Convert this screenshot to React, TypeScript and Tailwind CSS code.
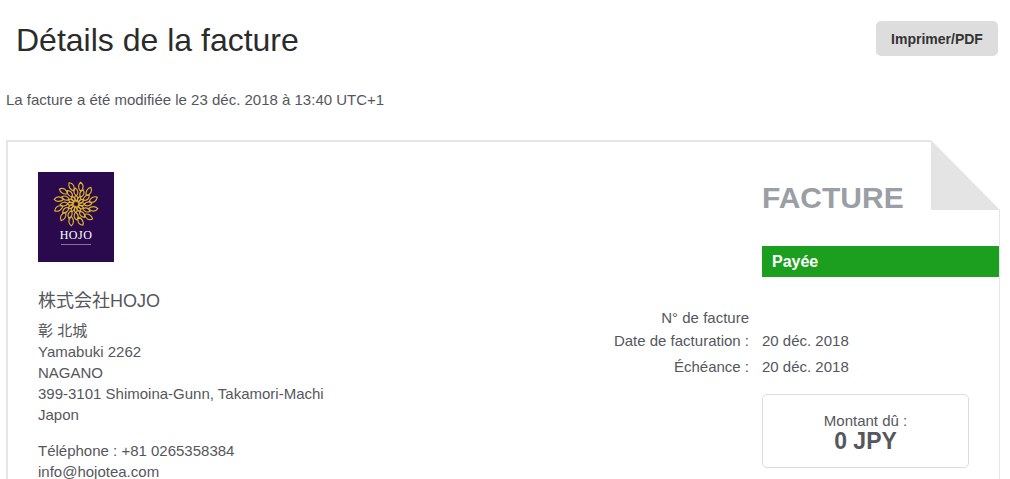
const sans = { fontFamily: '"Liberation Sans", "Noto Sans CJK JP", sans-serif' };

const petals = [0, 30, 60, 90, 120, 150, 180, 210, 240, 270, 300, 330];

function Logo() {
  return (
    <div className="flex h-[90px] w-[76px] flex-col items-center bg-[#2a0a4c]">
      <svg viewBox="0 0 52 52" className="mt-[9px] h-[46px] w-[46px] shrink-0" fill="none" stroke="#dcb42a" strokeWidth="1.3">
        {/* mandala, three rings of curved leaves */}
        {petals.map((a) => (
          <path key={`o${a}`} d="M26 0.8 C30 2.5 31.5 7 28 11 C24.5 8.5 23.5 4 26 0.8Z" transform={`rotate(${a + 12} 26 26)`} />
        ))}
        {petals.map((a) => (
          <path key={`m${a}`} d="M26 8 C29 10 30 13.5 27 17 C24.2 14.5 23.6 11 26 8Z" transform={`rotate(${a + 27} 26 26)`} />
        ))}
        {petals.map((a) => (
          <path key={`i${a}`} d="M26 16 C28 17.5 28.5 20 26.5 23 C24.5 21 24.2 18 26 16Z" transform={`rotate(${a} 26 26)`} />
        ))}
      </svg>
      <div className="mt-[1px] text-[12px] leading-[15px] font-medium tracking-[0.5px] text-white" style={{ fontFamily: '"Liberation Serif", serif' }}>
        HOJO
      </div>
      <div className="mt-[1px] h-px w-[30px] bg-[#8a7399]" />
    </div>
  );
}

function MetaRow({ label, value, className }: { label: string; value?: string; className: string }) {
  return (
    <div className={`flex ${className}`}>
      <div className="w-[142px] text-right">{label}</div>
      <div className="ml-[13px]">{value}</div>
    </div>
  );
}

export default function App() {
  return (
    <div className="h-[479px] w-[1010px] overflow-hidden bg-white text-[15px] leading-[21px] text-[#55575c]" style={sans}>
      <div className="flex h-[89px] items-start justify-between pl-[16px] pr-[12px]">
        <h1 className="mt-[18px] text-[32px] leading-[44px] font-normal text-[#2b2b2b]">Détails de la facture</h1>
        <button className="mt-[21px] h-[35px] w-[122px] rounded-[5px] bg-[#dddddd] pt-[2px] text-[14px] font-bold text-[#333333]">Imprimer/PDF</button>
      </div>

      <p className="pl-[6px]">La facture a été modifiée le 23 déc. 2018 à 13:40 UTC+1</p>

      <div className="relative mt-[30px] ml-[6px] flex h-[420px] w-[994px] justify-between border-2 border-r-[1px] border-[#e5e5e5] pt-[30px] pl-[30px]">
        {/* folded corner */}
        <svg viewBox="0 0 69 70" className="absolute -top-[2px] -right-[1px] h-[70px] w-[69px]">
          <rect width="69" height="70" fill="#ffffff" />
          <polygon points="0,0 69,70 0,70" fill="#e4e4e4" />
        </svg>

        <div>
          <Logo />
          <div className="mt-[28px] text-[18px] leading-[22px]">株式会社HOJO</div>
          <div className="mt-[8px]">
            <div>彰 北城</div>
            <div>Yamabuki 2262</div>
            <div>NAGANO</div>
            <div>399-3101 Shimoina-Gunn, Takamori-Machi</div>
            <div>Japon</div>
          </div>
          <div className="mt-[15px]">
            <div>Téléphone : +81 0265358384</div>
            <div>info@hojotea.com</div>
          </div>
        </div>

        <div className="w-[392px]">
          <div className="flex justify-end">
            <div className="w-[237px]">
              <div className="mt-[8px] text-[30px] leading-[36px] font-bold text-[#9a9ea5]">FACTURE</div>
              <div className="mt-[30px] h-[31px] bg-[#1c9f1e] pl-[10px] text-[16px] leading-[31px] font-bold text-white">Payée</div>
            </div>
          </div>
          <MetaRow label="N° de facture" className="mt-[30px]" />
          <MetaRow label="Date de facturation :" value="20 déc. 2018" className="mt-[2px]" />
          <MetaRow label="Échéance :" value="20 déc. 2018" className="mt-[5px]" />
          <div className="mt-[17px] ml-[155px] flex h-[74px] w-[207px] flex-col items-center rounded-[5px] border border-[#dddddd] pt-[16px]">
            <div className="leading-[20px]">Montant dû :</div>
            <div className="text-[23px] leading-[20px] font-bold">0 JPY</div>
          </div>
        </div>
      </div>
    </div>
  );
}
